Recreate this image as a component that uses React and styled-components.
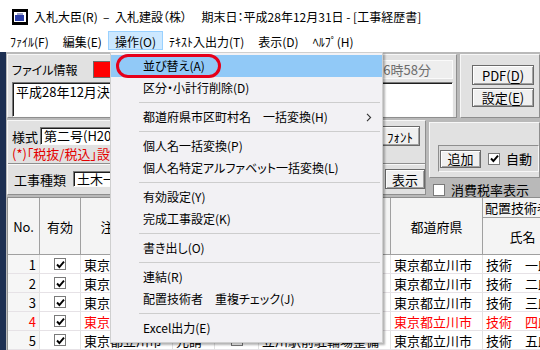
import React from 'react'
import styled, { createGlobalStyle } from 'styled-components'

const GlobalStyle = createGlobalStyle`
  html, body {
    margin: 0;
    padding: 0;
  }
  body {
    width: 540px;
    height: 350px;
    overflow: hidden;
    background: #fff;
    font-family: "Noto Sans CJK JP", "Noto Sans", sans-serif;
    font-feature-settings: "palt";
    color: #000;
  }
`

const Window = styled.div`
  position: relative;
  width: 540px;
  height: 350px;
  overflow: hidden;
  display: flex;
  flex-direction: column;
  background: #fff;
`

const TitleBar = styled.div`
  height: 30px;
  flex: none;
  display: flex;
  align-items: center;
  padding: 3px 0 0 12px;
  box-sizing: border-box;
  gap: 6px;
  font-size: 12px;
  white-space: pre;
`

const MenuBar = styled.div`
  height: 22px;
  flex: none;
  display: flex;
  align-items: flex-start;
  padding: 1px 0 0 3px;
  box-sizing: border-box;
  font-size: 12px;
`

const MenuBarItem = styled.div`
  height: 19px;
  line-height: 19px;
  padding: 0 6px;
  box-sizing: border-box;
  border: 1px solid ${({ active }) => (active ? '#99d1ff' : 'transparent')};
  background: ${({ active }) => (active ? '#cce8ff' : 'transparent')};
  margin-left: ${({ active }) => (active ? '-1px' : '0')};
  margin-right: ${({ active }) => (active ? '-1px' : '0')};
`

const Body = styled.div`
  flex: 1;
  display: flex;
  min-height: 0;
`

const Desk = styled.div`
  width: 6px;
  flex: none;
  background: #1d2f52;
`

const Child = styled.div`
  flex: 1;
  display: flex;
  flex-direction: column;
  background: #b9b9b9;
  padding: 2px 0 0 1px;
  gap: 2px;
  min-width: 0;
`

const Row = styled.div`
  display: flex;
  height: ${({ h }) => h}px;
  gap: ${({ gap }) => gap || 3}px;
  flex: none;
`

const Panel = styled.div`
  background: #e1e1e1;
  border: 1px solid;
  border-color: #f7f7f7 #8e8e8e #8e8e8e #f7f7f7;
  box-sizing: border-box;
  width: ${({ w }) => (w ? `${w}px` : 'auto')};
  flex: ${({ w }) => (w ? 'none' : '1')};
  display: flex;
  flex-direction: column;
  padding: ${({ pad }) => pad || '0'};
  gap: ${({ gap }) => gap || 0}px;
`

const Line = styled.div`
  display: flex;
  align-items: center;
  height: ${({ h }) => h}px;
  gap: ${({ gap }) => gap || 0}px;
  padding-left: ${({ pl }) => pl || 0}px;
  flex: none;
`

const Label = styled.div`
  font-size: ${({ fs }) => fs || 13}px;
  white-space: nowrap;
  width: ${({ w }) => (w ? `${w}px` : 'auto')};
  flex: none;
`

const RedBox = styled.div`
  width: 60px;
  height: 17px;
  background: #ff0000;
  border: 1px solid #6b6b6b;
  box-sizing: border-box;
`

const DateBox = styled.div`
  margin-left: auto;
  width: 150px;
  height: 19px;
  box-sizing: border-box;
  border: 1px solid #fafafa;
  background: #eeeeee;
  color: #6d6d6d;
  font-size: 13px;
  line-height: 17px;
  display: flex;
  justify-content: flex-end;
  padding-right: 21px;
  white-space: nowrap;
  overflow: hidden;
  span {
    flex: none;
  }
`

const Field = styled.div`
  height: ${({ h }) => h}px;
  width: ${({ w }) => (w ? `${w}px` : 'auto')};
  flex: ${({ w }) => (w ? 'none' : '1')};
  box-sizing: border-box;
  background: #fff;
  border: 1px solid;
  border-color: #7a7a7a #fcfcfc #fcfcfc #7a7a7a;
  box-shadow: inset 1px 1px #1e1e1e;
  font-size: 13px;
  line-height: ${({ h }) => (h > 24 ? '15px' : `${h - 2}px`)};
  padding: ${({ h }) => (h > 24 ? '1px 3px' : '0 3px')};
  white-space: nowrap;
  overflow: hidden;
`

const Button = styled.div`
  width: ${({ w }) => w}px;
  height: ${({ h }) => h || 20}px;
  flex: none;
  box-sizing: border-box;
  border: 1px solid #6a6a6a;
  box-shadow: inset 1px 1px #ffffff, inset -1px -1px #a2a2a2;
  background: #f0f0f0;
  font-size: 13px;
  display: flex;
  align-items: center;
  justify-content: center;
  white-space: nowrap;
  u {
    text-decoration: underline;
    text-underline-offset: 2px;
  }
`

const RedNote = styled.div`
  height: 16px;
  line-height: 16px;
  font-size: 13px;
  color: #e40000;
  padding-left: 4px;
  white-space: nowrap;
  flex: none;
`

const SubPanel = styled.div`
  margin-top: auto;
  height: 30px;
  border-top: 1px solid #8e8e8e;
  box-shadow: inset 0 1px #f7f7f7;
  display: flex;
  align-items: center;
  padding: 0 2px 0 6px;
  gap: 9px;
`

const SideCol = styled.div`
  flex: 1;
  display: flex;
  flex-direction: column;
  gap: 2px;
  padding-top: 2px;
`

const Sunken = styled.div`
  margin: 22px 0 0 8px;
  height: 27px;
  box-sizing: border-box;
  border: 1px solid;
  border-color: #8e8e8e #f7f7f7 #f7f7f7 #8e8e8e;
  background: #d9d9d9;
  display: flex;
  align-items: center;
  padding-left: 1px;
  gap: 7px;
`

const CheckRow = styled.div`
  display: flex;
  align-items: center;
  gap: 6px;
  font-size: 13px;
  padding-left: ${({ pl }) => pl || 0}px;
`

const Box = styled.div`
  width: ${({ s }) => s || 11}px;
  height: ${({ s }) => s || 11}px;
  box-sizing: border-box;
  border: 1px solid #7a7a7a;
  background: #fff;
  display: flex;
  align-items: center;
  justify-content: center;
  flex: none;
`

const Grid = styled.div`
  flex: 1;
  display: grid;
  grid-template-columns: 32px 41px 92px 42px 44px 132px 92px 80px;
  grid-template-rows: 20px 37px repeat(5, 19px);
  background: #fff;
  border-top: 1px solid #8e8e8e;
  border-left: 1px solid #8e8e8e;
  font-size: 13px;
  overflow: hidden;
`

const HeadCell = styled.div`
  background: #f4f4f4;
  border-right: 1px solid #a0a0a0;
  border-bottom: 1px solid #a0a0a0;
  display: flex;
  align-items: center;
  justify-content: ${({ left }) => (left ? 'flex-start' : 'center')};
  padding-left: ${({ left }) => (left ? '2px' : '0')};
  white-space: nowrap;
  overflow: hidden;
  grid-row: ${({ span }) => (span ? '1 / span 2' : 'auto')};
`

const Cell = styled.div`
  border-right: 1px solid #e2e2e2;
  border-bottom: 1px solid #e6e2e6;
  display: flex;
  align-items: center;
  justify-content: ${({ align }) => align || 'flex-start'};
  padding: 0 3px;
  white-space: nowrap;
  overflow: hidden;
  color: ${({ red }) => (red ? '#ff0000' : '#000')};
  background: ${({ shade }) => (shade ? '#f6f6f6' : '#fff')};
`

const DropMenu = styled.div`
  position: absolute;
  left: 110px;
  top: 52px;
  width: 273px;
  box-sizing: border-box;
  background: #f2f1f4;
  border: 1px solid #cfcfcf;
  box-shadow: 2px 2px 2px rgba(0, 0, 0, 0.3);
  padding: 2px 0 3px;
  font-size: 12px;
`

const MenuItem = styled.div`
  position: relative;
  height: 22px;
  line-height: 22px;
  padding-left: 32px;
  white-space: nowrap;
  background: ${({ hot }) => (hot ? '#91c9f7' : 'transparent')};
`

const Arrow = styled.svg`
  position: absolute;
  right: 10px;
  top: 7px;
`

const Separator = styled.div`
  height: 7px;
  margin: 0 2px 0 28px;
  display: flex;
  align-items: center;
  &::after {
    content: '';
    flex: 1;
    height: 1px;
    background: #cdcdcd;
  }
`

const Annotation = styled.div`
  position: absolute;
  left: 116px;
  top: 54px;
  width: 105px;
  height: 24px;
  box-sizing: border-box;
  border: 3px solid #e6001a;
  border-radius: 12px;
`

function Check({ on, size }) {
  return (
    <Box s={size}>
      {on && (
        <svg width="9" height="9" viewBox="0 0 9 9">
          <path d="M1 4.5 L3.4 7 L8 1.6" fill="none" stroke="#000" strokeWidth="1.9" />
        </svg>
      )}
    </Box>
  )
}

function AppIcon() {
  return (
    <svg width="16" height="16" viewBox="0 0 16 16">
      <rect x="0" y="0" width="16" height="16" fill="#000" />
      <rect x="2" y="3" width="12" height="10" fill="#fff" />
      <rect x="3" y="6" width="9" height="6" fill="#2d3fa8" />
      <rect x="5" y="4" width="6" height="2" fill="#9aa0c8" />
    </svg>
  )
}

const menuBarItems = ['ﾌｧｲﾙ(F)', '編集(E)', '操作(O)', 'ﾃｷｽﾄ入出力(T)', '表示(D)', 'ﾍﾙﾌﾟ(H)']

const menuItems = [
  '並び替え(A)',
  '区分・小計行削除(D)',
  '-',
  '都道府県市区町村名　一括変換(H)>',
  '-',
  '個人名一括変換(P)',
  '個人名特定アルファベット一括変換(L)',
  '-',
  '有効設定(Y)',
  '完成工事設定(K)',
  '-',
  '書き出し(O)',
  '-',
  '連結(R)',
  '配置技術者　重複チェック(J)',
  '-',
  'Excel出力(E)',
]

const names = ['一郎', '二郎', '三郎', '四郎', '五郎']

function App() {
  return (
    <Window>
      <GlobalStyle />
      <TitleBar>
        <AppIcon />
        <span>入札大臣(R)  –  入札建設（株）　 期末日：平成28年12月31日 - [工事経歴書]</span>
      </TitleBar>
      <MenuBar>
        {menuBarItems.map((m) => (
          <MenuBarItem key={m} active={m === '操作(O)'}>
            {m}
          </MenuBarItem>
        ))}
      </MenuBar>
      <Body>
        <Desk />
        <Child>
          <Row h={64} gap={3}>
            <Panel w={450} pad="4px 3px 0 4px" gap={2}>
              <Line h={21}>
                <Label w={81} fs={12}>ファイル情報</Label>
                <RedBox />
                <DateBox>
                  <span>平成28年12月31日 16時58分</span>
                </DateBox>
              </Line>
              <Field h={33}>平成28年12月決算</Field>
            </Panel>
            <Panel pad="10px 0 0 11px" gap={3}>
              <Button w={62}>
                PDF(<u>D</u>)
              </Button>
              <Button w={62} h={19}>
                設定(<u>E</u>)
              </Button>
            </Panel>
          </Row>
          <Row h={75} gap={3}>
            <Panel w={419} pad="5px 0 0 0">
              <Line h={20} gap={3} pl={4}>
                <Label w={25}>様式</Label>
                <Field h={18} w={337}>第二号(H20年改正)</Field>
                <Button w={40}>ﾌｫﾝﾄ</Button>
              </Line>
              <RedNote>(*)「税抜/税込」設定を確認してください。</RedNote>
              <SubPanel>
                <Label w={50}>工事種類</Label>
                <Field h={16} w={303}>土木一式工事</Field>
                <Button w={40}>表示</Button>
              </SubPanel>
            </Panel>
            <SideCol>
              <Panel style={{ height: 56, flex: 'none' }}>
                <Sunken>
                  <Button w={41} h={18}>追加</Button>
                  <CheckRow>
                    <Check on size={12} />
                    自動
                  </CheckRow>
                </Sunken>
              </Panel>
              <CheckRow pl={4}>
                <Check size={12} />
                消費税率表示
              </CheckRow>
            </SideCol>
          </Row>
          <Grid>
            <HeadCell span>No.</HeadCell>
            <HeadCell span>有効</HeadCell>
            <HeadCell span>注文者名</HeadCell>
            <HeadCell span>元請</HeadCell>
            <HeadCell span>JV</HeadCell>
            <HeadCell span>工事名</HeadCell>
            <HeadCell span>都道府県</HeadCell>
            <HeadCell left>配置技術者</HeadCell>
            <HeadCell style={{ gridColumn: 8 }}>氏名</HeadCell>
            {names.map((n, i) => {
              const red = i === 3
              return (
                <React.Fragment key={n}>
                  <Cell align="flex-end" shade red={red}>
                    {i + 1}
                  </Cell>
                  <Cell align="center">
                    <Check on size={12} />
                  </Cell>
                  <Cell red={red}>東京都立川市</Cell>
                  <Cell red={red}>元請</Cell>
                  <Cell align="center">
                    <Check size={12} />
                  </Cell>
                  <Cell red={red}>立川駅前駐輪場整備</Cell>
                  <Cell red={red}>東京都立川市</Cell>
                  <Cell red={red}>技術　{n}</Cell>
                </React.Fragment>
              )
            })}
          </Grid>
        </Child>
      </Body>
      <DropMenu>
        {menuItems.map((m, i) =>
          m === '-' ? (
            <Separator key={i} />
          ) : (
            <MenuItem key={i} hot={i === 0}>
              {m.replace('>', '')}
              {m.endsWith('>') && (
                <Arrow width="6" height="9" viewBox="0 0 6 9">
                  <path d="M1 0.8 L4.6 4.5 L1 8.2" fill="none" stroke="#333" strokeWidth="1.1" />
                </Arrow>
              )}
            </MenuItem>
          )
        )}
      </DropMenu>
      <Annotation />
    </Window>
  )
}

export default App
